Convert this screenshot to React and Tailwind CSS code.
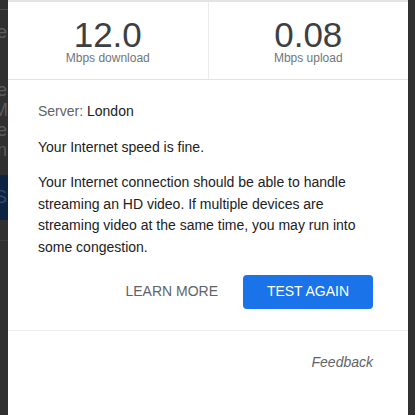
import React from "react";

const font = { fontFamily: '"Liberation Sans", Arial, sans-serif' };

// dimmed page that peeks out at the left edge of the dialog
function BackdropStrip() {
  return (
    <div className="w-[8px] shrink-0 overflow-hidden flex flex-col items-end">
      <div className="w-[60px] shrink-0 mt-[9px] border-t border-[#4a4a4a]" />
      <div className="flex w-full justify-end whitespace-nowrap text-[18px] text-[#5c5c5c] mt-[12px] leading-[20px] pr-[1px]">le</div>
      <div className="flex flex-col items-end w-full mt-[38px] text-[18px] leading-[20px] text-[#5c5c5c] whitespace-nowrap">
        <span className="pr-[1px]">re</span>
        <span className="pr-0">M</span>
        <span className="pr-[1px]">ne</span>
        <span className="pr-[1px]">n</span>
      </div>
      <div className="mt-[15px] w-[60px] h-[45px] bg-[#0c2442] flex items-center justify-end text-[18px] text-[#34496b] pr-[1px]">S</div>
      <div className="w-[60px] mt-[20px] border-t border-[#3c3c3c]" />
    </div>
  );
}

function Stat({ value, label, divider }) {
  return (
    <div className={`flex-1 flex flex-col items-center pt-[16px] ${divider ? "border-r border-[#ececec]" : ""}`}>
      <span className="text-[35px] leading-[33px] text-[#3c4043]">{value}</span>
      <span className="text-[12px] leading-[14px] text-[#70757a]">{label}</span>
    </div>
  );
}

export default function App() {
  return (
    <div className="flex h-[415px] w-[415px] overflow-hidden bg-[#303030]" style={font}>
      <BackdropStrip />

      <div className="w-[400px] shrink-0 bg-white border-t-2 border-[#e3e3e3] flex flex-col">
        <div className="flex h-[78px] border-b border-[#e3e3e3]">
          <Stat value="12.0" label="Mbps download" divider />
          <Stat value="0.08" label="Mbps upload" />
        </div>

        <div className="pl-[30px] pr-[35px] pt-[21px] text-[14px] text-[#202124]">
          <p className="leading-[20px]">
            <span className="text-[#5f6368]">Server: </span>London
          </p>
          <p className="leading-[20px] mt-[16px]">Your Internet speed is fine.</p>
          <p className="leading-[21.7px] mt-[15px]">
            Your Internet connection should be able to handle streaming an HD video. If multiple devices are streaming video at the same time, you may run into some congestion.
          </p>

          <div className="flex justify-end items-center gap-[9px] mt-[16px]">
            <button className="px-[16px] h-[34px] text-[14px] text-[#5f6368] uppercase">Learn more</button>
            <button className="w-[130px] h-[34px] rounded-[4px] bg-[#1a73e8] text-white text-[14px] uppercase">Test again</button>
          </div>
        </div>

        <div className="mt-[21px] border-t border-[#ececec]" />

        <div className="pr-[35px] pt-[21px] flex justify-end">
          <span className="italic text-[14px] text-[#5f6368]">Feedback</span>
        </div>
      </div>

      <div className="flex-1" />
    </div>
  );
}
